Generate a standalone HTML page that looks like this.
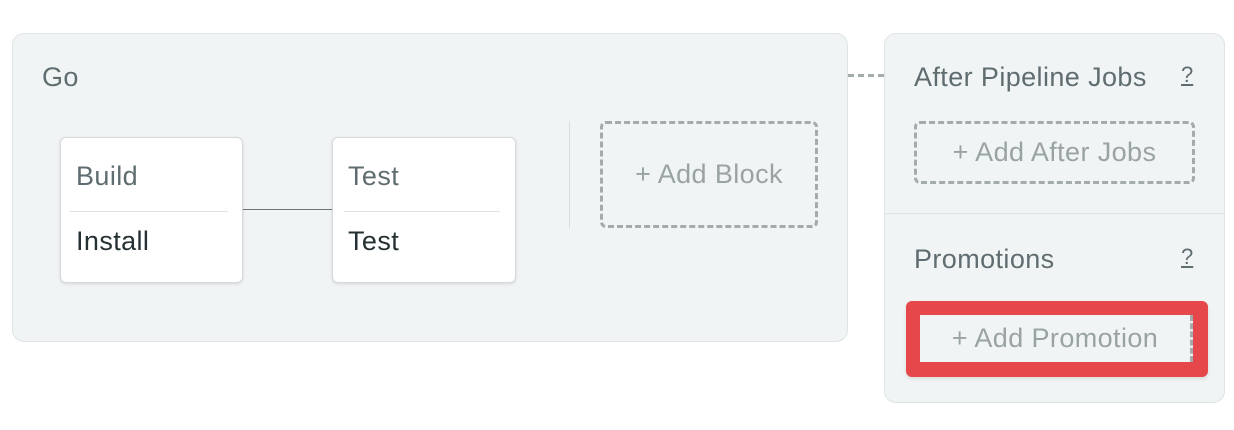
<!DOCTYPE html>
<html><head><style>
body{margin:0;width:1234px;height:430px;background:#fff;font-family:"Liberation Sans",sans-serif;position:relative;overflow:hidden}
.a{position:absolute;box-sizing:border-box}
.panel{background:#f1f4f5;border:1px solid #dfe4e6;border-radius:12px}
.card{background:#fff;border:1px solid #d5dadc;border-radius:6px;box-shadow:0 1px 3px rgba(0,0,0,.12)}
.t{position:absolute;font-size:27px;letter-spacing:0.4px;color:#5f6c70;white-space:nowrap;line-height:30px}
.dash{border:3px dashed #a3abac;border-radius:6px;color:#9aa3a3;font-size:27px;letter-spacing:0.4px;display:flex;align-items:center;justify-content:center}
.q{position:absolute;font-size:22px;color:#5f6c70;text-decoration:underline}
</style></head><body>
<div class="a panel" style="left:12px;top:33px;width:836px;height:309px"></div>
<div class="t" style="left:42px;top:62px">Go</div>
<div class="a" style="left:242px;top:209px;width:91px;height:1px;background:#6d7678"></div>
<div class="a card" style="left:60px;top:137px;width:183px;height:146px"></div>
<div class="t" style="left:76px;top:161px">Build</div>
<div class="a" style="left:70px;top:211px;width:158px;height:1px;background:#dde2e3"></div>
<div class="t" style="left:76px;top:226px;color:#253033">Install</div>
<div class="a card" style="left:332px;top:137px;width:184px;height:146px"></div>
<div class="t" style="left:348px;top:161px">Test</div>
<div class="a" style="left:344px;top:211px;width:156px;height:1px;background:#dde2e3"></div>
<div class="t" style="left:348px;top:226px;color:#253033">Test</div>
<div class="a" style="left:569px;top:121px;width:1px;height:107px;background:#d8dddf"></div>
<div class="a dash" style="left:600px;top:121px;width:218px;height:107px">+ Add Block</div>
<div class="a" style="left:848px;top:74px;width:36px;height:0;border-top:3px dashed #a3abac"></div>
<div class="a panel" style="left:884px;top:33px;width:341px;height:370px"></div>
<div class="t" style="left:914px;top:62px">After Pipeline Jobs</div>
<div class="q" style="left:1181px;top:62px">?</div>
<div class="a dash" style="left:914px;top:121px;width:281px;height:63px">+ Add After Jobs</div>
<div class="a" style="left:885px;top:213px;width:339px;height:1px;background:#dfe4e6"></div>
<div class="t" style="left:914px;top:244px">Promotions</div>
<div class="q" style="left:1181px;top:244px">?</div>
<div class="a" style="left:906px;top:301px;width:302px;height:76px;background:#e5474b;border-radius:6px;box-shadow:0 2px 4px rgba(0,0,0,.1)"></div>
<div class="a" style="left:920px;top:315px;width:273px;height:47px;background:#f1f4f5;border-right:3px dashed #a3abac;color:#9aa3a3;font-size:27px;letter-spacing:0.4px;display:flex;align-items:center;justify-content:center">+ Add Promotion</div>
</body></html>
